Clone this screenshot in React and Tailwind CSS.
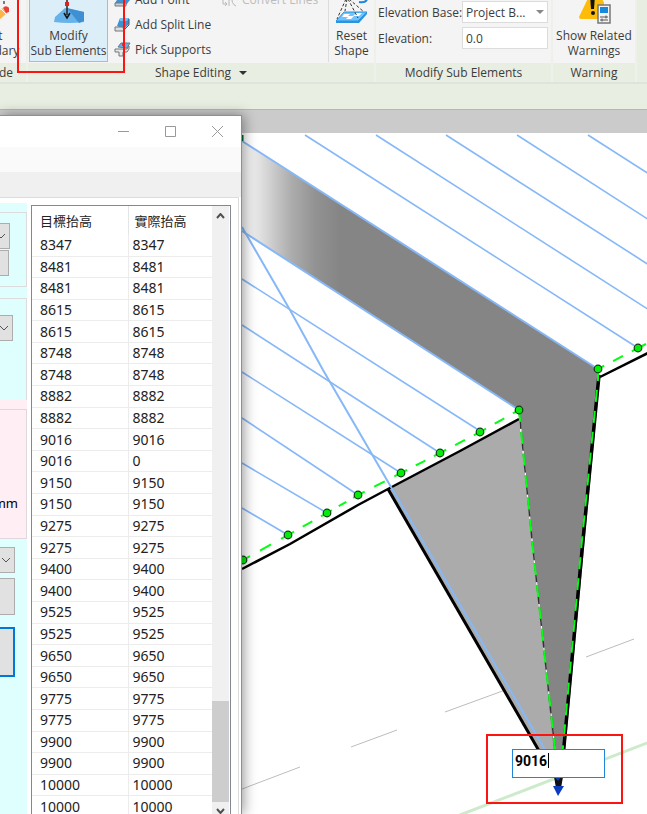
const ROWS = [
  ['8347', '8347'], ['8481', '8481'], ['8481', '8481'], ['8615', '8615'], ['8615', '8615'],
  ['8748', '8748'], ['8748', '8748'], ['8882', '8882'], ['8882', '8882'], ['9016', '9016'],
  ['9016', '0'], ['9150', '9150'], ['9150', '9150'], ['9275', '9275'], ['9275', '9275'],
  ['9400', '9400'], ['9400', '9400'], ['9525', '9525'], ['9525', '9525'], ['9650', '9650'],
  ['9650', '9650'], ['9775', '9775'], ['9775', '9775'], ['9900', '9900'], ['9900', '9900'],
  ['10000', '10000'], ['10000', '10000'],
];

// joists, as x1 y1 x2 y2
const JOISTS = [
  [305, 2, 638, 215], [376, 2, 660, 184], [446, 2, 660, 139], [517, 2, 660, 94], [588, 2, 660, 48],
  [242, 146, 480, 298], [242, 192, 440, 320], [242, 239, 401, 340], [242, 285, 358, 362],
  [242, 330, 327, 380], [242, 375, 288, 402],
];

const POINTS = [
  [243, 427], [288, 402], [327, 380], [358, 362], [401, 340],
  [440, 320], [480, 299], [519, 277], [598, 236], [638, 215],
];

function EditBoundaryIcon() {
  return (
    <svg width="34" height="24" viewBox="0 0 34 24" className="shrink-0">
      <path d="M29 1v3" stroke="#555" strokeWidth="1.5" />
      <path d="M18 22l1-5L27 8l5 5-9 8z" fill="#fbb44a" />
      <path d="M28 8q2-3 5-1t1 5l-3 1z" fill="#ee3f33" />
      <path d="M26 9l5 5" stroke="#fff" />
    </svg>
  );
}

function ModifyIcon() {
  return (
    <svg width="32" height="32" viewBox="0 0 32 32" className="shrink-0">
      <path d="M1 30L2 25 12 16 31 20V30q-15 2-30 0z" fill="#66b2ea" />
      <path d="M14 16L31 20V29L26 31z" fill="#3f90d2" />
      <path d="M14 0v23" stroke="#222" strokeWidth="1.500" />
      <path d="M11 21l3 5 3-5" stroke="#111" strokeWidth="1.500" fill="none" />
      <rect x="12" y="10" width="4" height="4" fill="#d22" />
    </svg>
  );
}

function PointIcon() {
  return (
    <svg width="17" height="17" viewBox="0 0 17 17" className="shrink-0">
      <path d="M1 12l5-8h9l1 5-4 5z" fill="#3a92d8" />
      <path d="M1 12l11 0 0 3H1z" fill="#c9ccd0" stroke="#777" />
    </svg>
  );
}

function SplitLineIcon() {
  return (
    <svg width="17" height="17" viewBox="0 0 17 17" className="shrink-0">
      <path d="M3 10l3-8h9v6l-5 5z" fill="#3a92d8" />
      <path d="M6 2h9l-2 3H6z" fill="#78bdf0" />
      <path d="M1 11h8l1 4H1z" fill="#dcdfe2" stroke="#777" />
      <path d="M10 14l5-5V3" stroke="#555" fill="none" />
    </svg>
  );
}

function SupportsIcon() {
  return (
    <svg width="17" height="17" viewBox="0 0 17 17" className="shrink-0">
      <path d="M4 6l3-4h9l-3 5z" fill="#6bb0e2" stroke="#5b7f9c" />
      <path d="M1 8h12l2-3v3l-2 3H9v4H5v-4H1z" fill="#e4e6e8" stroke="#777" />
      <path d="M9 2v3" stroke="#d33" strokeWidth="2" />
    </svg>
  );
}

function ConvertIcon() {
  return (
    <svg width="17" height="17" viewBox="0 0 17 17" className="shrink-0" fill="none" stroke="#b8b8b8">
      <path d="M2 9v4h4M4 11l2 2-2 2M8 5v10M15 15q-5-2-4-10" />
    </svg>
  );
}

function ResetIcon() {
  return (
    <svg width="33" height="32" viewBox="0 0 33 32" className="shrink-0">
      <path d="M1 29L9 20H32L23 29z" fill="#6fc2fa" stroke="#2b93e0" />
      <path d="M1 29H23L32 20v2L24 31H1z" fill="#2b93e0" />
      <path d="M9 22h6l-2 2h5l3-3h6l-3 3h-5l-3 3h-5l2-2H7z" fill="#fff" />
      <path d="M11 7L2 27M12 7l-2 12M13 7l10 19M14 7l15 13" stroke="#333" strokeDasharray="3 2" fill="none" />
      <path d="M24 10q7 1 8-3" stroke="#1b86dd" strokeWidth="2" fill="none" />
    </svg>
  );
}

function WarningIcon() {
  return (
    <svg width="36" height="32" viewBox="0 0 36 32" className="shrink-0">
      <path d="M15 0L3 25q0 2 2 2H28V0z" fill="#fdbb0a" />
      <path d="M22 0h8v14z" fill="#f4f4f4" />
      <path d="M14 3h5l-1 14h-3z" fill="#111" />
      <circle cx="17" cy="21" r="2" fill="#111" />
      <rect x="22" y="13" width="12" height="18" fill="#f4f4f4" stroke="#777" strokeWidth="1.5" />
      <rect x="24" y="15" width="8" height="6" fill="#1788e0" />
      <path d="M24 25h8M24 28h8M30 23.500v3M26 26.500v3" stroke="#555" />
    </svg>
  );
}

function Chevron({ up }) {
  return (
    <svg width="9" height="6" viewBox="0 0 9 6" fill="none" stroke="#505050" strokeWidth="2" className="shrink-0">
      <path d={up ? 'M1 5l3.500-4L8 5' : 'M1 1l3.500 4L8 1'} />
    </svg>
  );
}

function Panel({ label, className, children }) {
  return (
    <section className={`flex flex-col border-r-2 border-[#eef1e9] ${className}`}>
      <div className="flex h-[63px] items-end overflow-hidden bg-[#f4f4f4]">{children}</div>
      <div className="flex h-[19px] items-center justify-center whitespace-nowrap bg-[#e8eee2]">{label}</div>
    </section>
  );
}

function ToolButton({ icon, children }) {
  return (
    <button className="flex h-[25px] items-center gap-1 whitespace-nowrap">
      {icon}
      {children}
    </button>
  );
}

function Ribbon() {
  return (
    <header className="h-[110px] overflow-hidden border-b border-[#b5b8b2] bg-[#e8eee2] text-[12px] leading-[15px] text-[#3c3c3c]">
      <div className="flex border-b-2 border-[#dfe3db]">
        <Panel className="w-[28px] shrink-0" label={<span className="mr-8">Mode</span>}>
          <button className="-ml-9 flex w-14 shrink-0 flex-col items-center pb-[5px]">
            <EditBoundaryIcon />
            <span className="pt-[4px]">Edit</span>
            <span>Boundary</span>
          </button>
        </Panel>
        <Panel className="w-[348px] shrink-0" label={<>Shape Editing <span className="ml-2 border-x-4 border-t-4 border-x-transparent border-t-[#333]" /></>}>
          <button className="ml-[1px] mb-[1px] flex h-[72px] w-[79px] shrink-0 flex-col items-center justify-end border border-[#8cc5e6] bg-[#dceef7] pb-[3px]">
            <ModifyIcon />
            <span className="pt-[4px]">Modify</span>
            <span className="whitespace-nowrap">Sub Elements</span>
          </button>
          <div className="ml-[6px] flex w-[107px] shrink-0 flex-col pb-[1px]">
            <ToolButton icon={<PointIcon />}>Add Point</ToolButton>
            <ToolButton icon={<SplitLineIcon />}>Add Split Line</ToolButton>
            <ToolButton icon={<SupportsIcon />}>Pick Supports</ToolButton>
          </div>
          <div className="h-[76px] shrink-0 text-[#bcbcbc]">
            <ToolButton icon={<ConvertIcon />}>Convert Lines</ToolButton>
          </div>
          <button className="mb-[1px] ml-auto flex w-[46px] shrink-0 flex-col items-center border-l border-[#dcdcdc] pb-[4px]">
            <ResetIcon />
            <span className="pt-[4px]">Reset</span>
            <span>Shape</span>
          </button>
        </Panel>
        <Panel className="w-[177px] shrink-0" label="Modify Sub Elements">
          <div className="grid grid-cols-[84px_86px] items-center gap-y-[4px] whitespace-nowrap pb-[14px] pl-[2px]">
            <label htmlFor="base">Elevation Base:</label>
            <div className="relative">
              <select id="base" className="h-[22px] w-full appearance-none border border-[#dcdcdc] bg-white px-[3px]">
                <option>Project B...</option>
              </select>
              <span className="pointer-events-none absolute right-1 top-[9px] border-x-4 border-t-4 border-x-transparent border-t-[#888]" />
            </div>
            <label htmlFor="elevation">Elevation:</label>
            <input id="elevation" defaultValue="0.0" className="h-[22px] w-full border border-[#dcdcdc] bg-white px-[3px]" />
          </div>
        </Panel>
        <Panel className="w-[84px] shrink-0" label="Warning">
          <button className="mb-[1px] flex w-full flex-col items-center whitespace-nowrap pb-[4px]">
            <WarningIcon />
            <span className="pt-[4px]">Show Related</span>
            <span>Warnings</span>
          </button>
        </Panel>
      </div>
    </header>
  );
}

function Scene() {
  return (
    <svg className="block size-full">
      <defs>
        <linearGradient id="fade" gradientUnits="userSpaceOnUse" x1="242" y1="0" x2="340" y2="0">
          <stop offset="0" stopColor="#fafafa" />
          <stop offset="0.15" stopColor="#e6e6e6" />
          <stop offset="0.5" stopColor="#adadad" />
          <stop offset="0.75" stopColor="#929292" />
          <stop offset="1" stopColor="#858585" />
        </linearGradient>
      </defs>
      <g stroke="#bdbdbd">
        <path d="M586 524L634 506M445 579L508 556M351 614L397 597M242 656L300 634" />
      </g>
      <path d="M460 682L660 605" stroke="#cdebcb" strokeWidth="3" />

      <path d="M388 356L519 286 558 640H551z" fill="#ababab" />
      <path d="M242 8L598 236 600 244 563 640H556L519 277 242 98z" fill="url(#fade)" />

      <g stroke="#000" fill="none">
        <path d="M242 436L290 411 358 372 388 356 460 318 519 286" strokeWidth="2.500" />
        <path d="M600 244L660 214" strokeWidth="2.500" />
        <path d="M388 356L546 630" strokeWidth="3" />
        <path d="M599 242L583 407 562 635" strokeWidth="3.500" />
      </g>
      <path d="M519 277L532 407 557 635" stroke="#fff" fill="none" />
      <path d="M519 277L532 407 557 635" stroke="#333" strokeWidth="1.500" strokeDasharray="8 3" fill="none" />

      <g stroke="#86b8f8" strokeWidth="1.600" fill="none">
        {JOISTS.map(([x1, y1, x2, y2]) => (
          <line key={`${x1}-${y1}`} x1={x1} y1={y1} x2={x2} y2={y2} />
        ))}
        <path d="M242 8L598 236M242 98L519 277" strokeWidth="2" />
        <path d="M242 94L290 177 323 237 391 354 547 620" strokeWidth="2" />
      </g>

      <g stroke="#00ff10" strokeWidth="2" fill="none">
        {POINTS.slice(1).map(([x, y], i) => (
          i !== 7 && (
            <line
              key={x}
              x1={POINTS[i][0]}
              y1={POINTS[i][1]}
              x2={x}
              y2={y}
              pathLength="45"
              strokeDasharray="7 10 11 10 7"
            />
          )
        ))}
        <path d="M638 215L646 211" />
        <path d="M519 277L532 407 557 635" strokeDasharray="12 10" />
        <path d="M598 236V246L582 407 561 635" strokeDasharray="12 9" />
      </g>
      <g fill="#00ee08" stroke="#123a12" strokeWidth="1.200">
        {POINTS.map(([x, y]) => (
          <circle key={x} cx={x} cy={y} r="3.800" />
        ))}
      </g>
      <path d="M242 2v6" stroke="#063" strokeWidth="3" />

      <path d="M554 644H563L561 655H556z" fill="#111" />
      <path d="M554 643h8l-4 5z" fill="#0a3cc0" />
      <path d="M553 653H564L558 663z" fill="#0a3cc0" />
    </svg>
  );
}

function ComboEnd({ className }) {
  return (
    <button aria-label="Open list" className={`flex h-[26px] items-center justify-end border border-l-0 border-[#adadad] bg-[#e1e1e1] pr-1 ${className}`}>
      <svg width="8" height="5" viewBox="0 0 8 5" fill="none" stroke="#555" className="shrink-0">
        <path d="M0 0l4 4 4-4" />
      </svg>
    </button>
  );
}

function SidePanel() {
  return (
    <div className="w-[27px] shrink-0 overflow-hidden bg-[#dfffff] pt-[9px]">
      <div className="h-[75px] border border-l-0 border-[#dcdcdc] pt-[10px]">
        <ComboEnd className="w-[10px]" />
        <button aria-label="Apply" className="mt-[1px] block h-[26px] w-[9px] border border-l-0 border-[#adadad] bg-[#e1e1e1]" />
      </div>
      <div className="mt-[11px] h-[102px] border border-b-0 border-l-0 border-[#dcdcdc] pt-[16px]">
        <ComboEnd className="w-[13px]" />
      </div>
      <div className="h-[139px] bg-[#ffeff5] pt-[9px]">
        <div className="flex h-[130px] items-end justify-end border border-l-0 border-[#e0d8dc] pb-[26px] pr-[8px] text-[13px] leading-[18px]">mm</div>
      </div>
      <ComboEnd className="mt-[8px] w-[15px]" />
      <button aria-label="Run" className="mt-[5px] block h-[37px] w-[15px] border border-l-0 border-[#adadad] bg-[#e1e1e1]" />
      <button aria-label="Confirm" className="mt-[12px] block h-[50px] w-[15px] border-2 border-l-0 border-[#0078d7] bg-[#e1e1e1]" />
    </div>
  );
}

function HeightTable() {
  return (
    <div className="flex min-w-0 flex-1 overflow-hidden border border-b-0 border-[#828790] bg-white">
      <div className="flex-1 overflow-hidden">
        <table className="h-[612px] w-full table-fixed border-collapse text-left text-[14px] leading-[18px] text-[#222]">
          <thead>
            <tr className="h-[29px] font-['Noto_Sans_CJK_TC',sans-serif] text-[13px]">
              <th className="w-[96px] border-r border-[#e5e5e5] p-0 pl-[8px] font-normal">目標抬高</th>
              <th className="p-0 pl-[6px] font-normal">實際抬高</th>
            </tr>
          </thead>
          <tbody>
            {ROWS.map(([target, actual], i) => (
              <tr key={i} className="border-b border-[#ececec]">
                <td className="border-r border-[#ececec] p-0 pl-[8px]">{target}</td>
                <td className="p-0 pl-[4px]">{actual}</td>
              </tr>
            ))}
          </tbody>
        </table>
      </div>
      <div className="mr-[1px] flex w-[17px] flex-col items-center bg-[#f0f0f0] pt-[7px]">
        <Chevron up />
        <div className="flex-1" />
        <div className="h-[101px] w-full bg-[#cdcdcd]" />
        <div className="flex h-[12px] items-end"><Chevron /></div>
      </div>
    </div>
  );
}

function Dialog() {
  return (
    <div className="absolute bottom-0 left-0 top-[5px] flex w-[242px] flex-col border-r border-t border-[#8f8f8f] bg-white font-['Noto_Sans',sans-serif] shadow-[2px_0_12px_rgba(0,0,0,0.4)]">
      <div className="flex h-[31px] shrink-0 items-center justify-end gap-9 pr-[18px] text-[#999]">
        <button aria-label="Minimize">
          <svg width="11" height="11" viewBox="0 0 11 11" stroke="currentColor"><path d="M0 5.500h11" /></svg>
        </button>
        <button aria-label="Maximize">
          <svg width="11" height="11" viewBox="0 0 11 11" stroke="currentColor" fill="none"><path d="M.5.5h10v10H.5z" /></svg>
        </button>
        <button aria-label="Close">
          <svg width="11" height="11" viewBox="0 0 11 11" stroke="currentColor"><path d="M0 0l11 11M11 0L0 11" /></svg>
        </button>
      </div>
      <div className="h-[25px] shrink-0 bg-[#fafafa]" />
      <div className="h-[25px] shrink-0 bg-[#f0f0f0]" />
      <div className="mr-[2px] flex min-h-0 flex-1 border-r border-t border-[#dcdcdc] pr-[7px]">
        <div className="flex pt-[5px]"><SidePanel /></div>
        <div className="ml-[4px] flex min-w-0 flex-1 pt-[7px]"><HeightTable /></div>
      </div>
    </div>
  );
}

export default function App() {
  return (
    <div className="relative flex min-h-screen flex-col overflow-hidden bg-white font-['Open_Sans',sans-serif]">
      <Ribbon />
      <main className="relative flex flex-1 flex-col bg-[#cbcbcb] pt-[23px]">
        <div className="relative flex-1 bg-white">
          <div className="absolute inset-0 overflow-hidden">
            <Scene />
            <input
              aria-label="Point elevation"
              defaultValue="9016"
              className="absolute left-[512px] top-[616px] h-[29px] w-[93px] border border-[#1f86dc] bg-white px-[2px] pb-[6px] font-['Roboto',sans-serif] text-[14px] font-bold text-black"
            />
            <div className="absolute left-[548px] top-[620px] h-[15px] w-px bg-black" />
            <div className="pointer-events-none absolute left-[486px] top-[601px] h-[70px] w-[137px] border-2 border-[#fb1410]" />
          </div>
        </div>
        <Dialog />
      </main>
      <div className="pointer-events-none absolute left-[17px] top-[-4px] h-[77px] w-[108px] border-2 border-[#fb1410]" />
    </div>
  );
}
